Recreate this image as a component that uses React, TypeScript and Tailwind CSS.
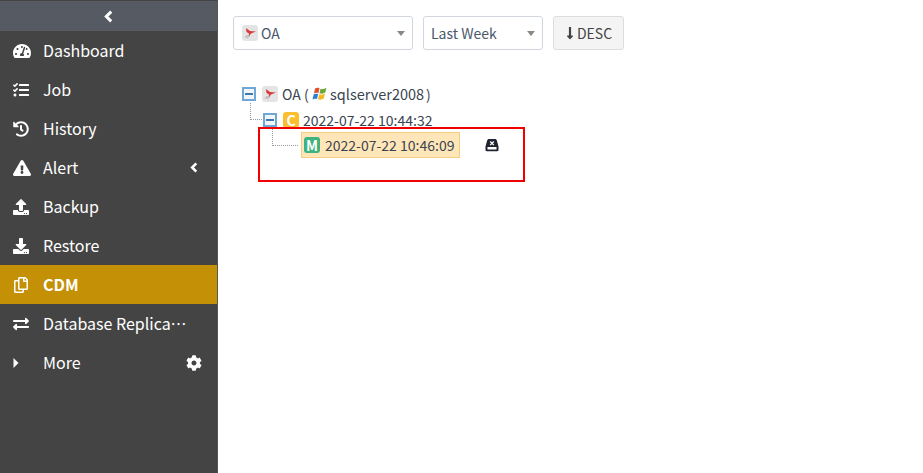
import React from 'react';
import {
  FaTachometerAlt,
  FaTasks,
  FaHistory,
  FaExclamationTriangle,
  FaUpload,
  FaDownload,
  FaRegCopy,
  FaExchangeAlt,
  FaCog,
  FaLongArrowAltDown,
} from 'react-icons/fa';

const font = 'font-["Noto_Sans_CJK_SC","Noto_Sans",sans-serif]';

const Chevron = ({ w, h }: { w: number; h: number }) => (
  <svg width={w} height={h} viewBox="0 0 8 12">
    <polyline points="6.500,1.500 2,6 6.500,10.500" fill="none" stroke="currentColor" strokeWidth="2.800" />
  </svg>
);

const CaretRight = () => (
  <svg width="6" height="10" viewBox="0 0 6 10">
    <polygon points="0.500,0 5.500,5 0.500,10" fill="currentColor" />
  </svg>
);

const menu = [
  { label: 'Dashboard', icon: <FaTachometerAlt size={18} /> },
  { label: 'Job', icon: <FaTasks size={16} /> },
  { label: 'History', icon: <FaHistory size={16} /> },
  { label: 'Alert', icon: <FaExclamationTriangle size={18} />, arrow: true },
  { label: 'Backup', icon: <FaUpload size={16} /> },
  { label: 'Restore', icon: <FaDownload size={16} /> },
  { label: 'CDM', icon: <FaRegCopy size={16} />, active: true },
  { label: 'Database Replication', icon: <FaExchangeAlt size={16} /> },
  { label: 'More', icon: <CaretRight />, gear: true },
];

const SqlIcon = () => (
  <span className="w-[16px] h-[16px] rounded-[3px] bg-[#e4e4e4] flex items-center justify-center shrink-0">
    <svg width="14" height="14" viewBox="0 0 14 14">
      <path d="M3 2l4 3 6 .5-5 2-2.500 3.500L6 7.500 3.500 6z" fill="#d83b3b" />
      <path d="M2 12c.5-2 3-3 5-1.500M3 9.500l2 3" stroke="#b0b0b0" fill="none" />
    </svg>
  </span>
);

const WinIcon = () => (
  <svg width="16" height="16" viewBox="0 0 16 16" className="shrink-0">
    <path d="M3 2.500c1.500-.8 3-.8 4.500-.2L6.500 7C5 6.500 3.500 6.600 2 7.300z" fill="#e2532d" />
    <path d="M8.500 2.700c2 .7 3.800.5 6-.9l-1.200 4.800c-2 1.300-3.800 1.300-5.800.7z" fill="#6da83a" />
    <path d="M1.700 8.300C3.200 7.600 4.700 7.500 6.200 8L5 13c-1.500-.5-3-.4-4.500.4z" fill="#2f7fd1" />
    <path d="M7.200 8.300c2 .6 3.800.5 5.800-.7l-1.200 5c-2 1.300-3.800 1.300-5.800.7z" fill="#f5b921" />
  </svg>
);

const Toggle = () => (
  <span className="w-[14px] h-[14px] border-2 border-[#6fa8d6] bg-[#f1f6fb] flex items-center justify-center shrink-0">
    <span className="w-[8px] h-[2px] bg-[#3f78ab]" />
  </span>
);

const Badge = ({ letter, color }: { letter: string; color: string }) => (
  <span className={`w-[16px] h-[16px] rounded-[3px] ${color} text-white text-[14px] font-bold leading-none flex items-center justify-center shrink-0`}>
    {letter}
  </span>
);

const SelectCaret = () => (
  <svg width="8" height="5" viewBox="0 0 8 5" className="shrink-0">
    <polygon points="0,0 8,0 4,5" fill="#888" />
  </svg>
);

export default function App() {
  return (
    <div className={`${font} flex w-[923px] h-[473px] overflow-hidden bg-white text-[14px] text-[#3a4450]`}>
      <aside className="w-[218px] shrink-0 bg-[#444444] text-white border-r border-[#555]">
        <div className="h-[31px] bg-[#555a63] border-t border-[#444] flex items-center justify-center">
          <Chevron w={9} h={13} />
        </div>
        <nav>
          {menu.map((m) => (
            <div
              key={m.label}
              className={`h-[39px] flex items-center pl-[13px] pr-[15px] text-[16px] ${m.active ? 'bg-[#c49005] font-bold' : ''}`}
            >
              <span className="w-[18px] shrink-0 flex">{m.icon}</span>
              <span className="ml-[12px] w-[146px] truncate pb-[2px]">{m.label}</span>
              <span className={`ml-auto flex items-center ${m.arrow ? 'mr-[4px]' : ''}`}>
                {m.arrow && <Chevron w={8} h={11} />}
                {m.gear && <FaCog size={16} />}
              </span>
            </div>
          ))}
        </nav>
      </aside>
      <main className="flex-1 pl-[15px] pt-[16px]">
        <div className="flex gap-[10px] h-[34px]">
          <div className="w-[180px] border border-[#d2d6de] rounded-[3px] flex items-center pl-[8px] pr-[7px]">
            <SqlIcon />
            <span className="ml-[3px] flex-1 text-[#49586b]">OA</span>
            <SelectCaret />
          </div>
          <div className="w-[120px] border border-[#d2d6de] rounded-[3px] flex items-center pl-[7px] pr-[7px]">
            <span className="flex-1 text-[#49586b]">Last Week</span>
            <SelectCaret />
          </div>
          <div className="w-[71px] border border-[#ddd] rounded-[3px] bg-[#f4f4f4] flex items-center justify-center text-[#444]">
            <FaLongArrowAltDown size={14} className="-ml-[2px]" />
            <span>DESC</span>
          </div>
        </div>
        <div className="relative mt-[32px] ml-[9px]">
          <div className="flex items-center h-[24px]">
            <Toggle />
            <span className="ml-[6px]"><SqlIcon /></span>
            <span className="ml-[4px] w-[24px] whitespace-nowrap">OA (</span>
            <span className="ml-[6px]"><WinIcon /></span>
            <span className="ml-[2px] whitespace-nowrap text-[14.500px]">sqlserver2008</span>
            <span className="ml-[2px]">)</span>
          </div>
          <div className="flex items-center h-[28px] ml-[21px]">
            <Toggle />
            <span className="ml-[6px]"><Badge letter="C" color="bg-[#f9bf2f]" /></span>
            <span className="ml-[4px] whitespace-nowrap">2022-07-22 10:44:32</span>
          </div>
          <div className="flex items-center h-[26px] -mt-[2px] ml-[59px]">
            <div className="h-[26px] w-[159px] bg-[#ffe6b8] border border-[#f5cd7e] flex items-center pl-[2px] gap-[5px]">
              <Badge letter="M" color="bg-[#3fb37f]" />
              <span className="whitespace-nowrap">2022-07-22 10:46:09</span>
            </div>
            <svg width="14" height="14" viewBox="0 0 14 14" className="ml-[25px]">
              <path d="M4 1h6c1 0 1.500.5 2 2l1.500 5.500V12c0 .7-.5 1.200-1.200 1.200H1.700C1 13.200.5 12.700.5 12V8.500L2 3c.5-1.500 1-2 2-2z" fill="#1f2430" />
              <rect x="2.500" y="9" width="9" height="2.500" fill="#fff" />
              <path d="M5.200 3.500l3.600 3.600M8.800 3.500L5.200 7.100" stroke="#fff" strokeWidth="1.300" />
            </svg>
          </div>
          {/* dotted tree lines */}
          <span className="absolute left-[8px] top-[21px] h-[17px] w-[12px] border-l border-b border-dotted border-[#999]" />
          <span className="absolute left-[30px] top-[46px] h-[18px] w-[26px] border-l border-b border-dotted border-[#999]" />
          {/* red annotation box */}
          <span className="absolute left-[16px] top-[45px] w-[267px] h-[55px] border-2 border-[#f00000]" />
        </div>
      </main>
    </div>
  );
}
